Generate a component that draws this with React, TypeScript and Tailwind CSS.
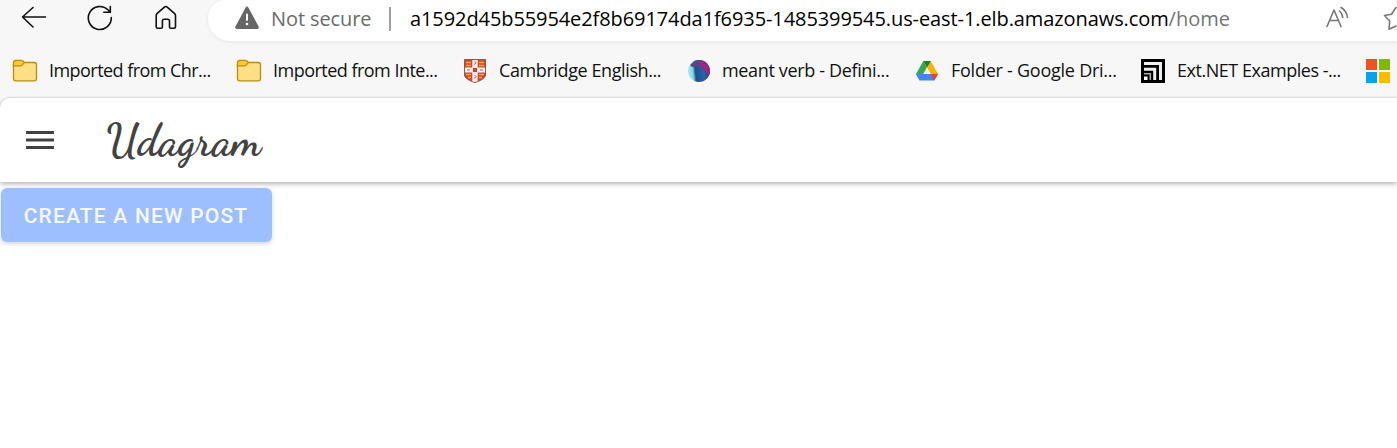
import type { ReactNode } from "react";

function FolderIcon() {
  return (
    <svg width="26" height="24" viewBox="0 0 26 24" className="shrink-0">
      <path d="M1.500 5v14.500a2.300 2.300 0 0 0 2.300 2.300h18.500a2.200 2.200 0 0 0 2.200-2.200V5.700a2.200 2.200 0 0 0-2.200-2.200H12Z" fill="#ffdf85" stroke="#bd8c0b" strokeWidth="1.300" />
      <path d="M1.500 6.800V3.500a2.200 2.200 0 0 1 2.200-2.200h5.500c1.400 0 2.400.8 3 2.300L10 6.300Q9.500 6.800 8.500 6.800Z" fill="#ffc928" stroke="#bd8c0b" strokeWidth="1.300" />
    </svg>
  );
}

function ShieldIcon() {
  return (
    <svg width="22" height="24" viewBox="0 0 22 24" className="shrink-0">
      <path d="M.5.5h21V16c0 3-5 6-10.500 7.500C5.500 22 .5 19 .5 16Z" fill="#d9432f" stroke="#8b5a45" />
      <path d="M2 3.500h5M2 6.500h5M15 3.500h5M15 6.500h5M2 15.500h5M15 15.500h5M4 18.500h3M15 18.500h3" stroke="#e9ad35" strokeWidth="1.700" />
      <path d="M8.300 1h5.400v7.500H21v5h-7.300v8.700L11 23l-2.700-.8v-8.700H1v-5h7.300Z" fill="#f7eeee" />
      <path d="M9 9h4v4H9Z" fill="#df3a2c" />
      <path d="M10.500 2.500l1.500 1-1.500 2M3 11h3M16 11h3M10.500 16l1.500 1.500-1.500 2" fill="none" stroke="#77777d" />
    </svg>
  );
}

function SphereIcon() {
  return (
    <svg width="24" height="24" viewBox="0 0 24 24" className="shrink-0">
      <defs>
        <linearGradient id="sphere" x1="0" x2="1" y1=".55" y2=".45">
          <stop offset="0" stopColor="#a8f4fb" />
          <stop offset=".24" stopColor="#86d6e8" />
          <stop offset=".35" stopColor="#214f86" />
          <stop offset=".7" stopColor="#2863ac" />
          <stop offset="1" stopColor="#292f78" />
        </linearGradient>
        <clipPath id="disc"><circle cx="12" cy="12" r="11" /></clipPath>
      </defs>
      <g clipPath="url(#disc)">
        <path d="M0 0h24v24H0Z" fill="url(#sphere)" />
        <path d="M9 7 12 0h12v17.500l-2-.5L13 7Z" fill="#922b83" />
        <path d="M3 6 10 0l4 2-2 5-7 1Z" fill="#5a4680" />
      </g>
    </svg>
  );
}

function DriveIcon() {
  return (
    <svg width="22" height="20" viewBox="0 0 22 20" className="shrink-0">
      <path d="M7.300 0 0 13l3.700 6.500L11 6.400Z" fill="#34a853" />
      <path d="M7.300 0h7.400L22 13h-7.400Z" fill="#fbb004" />
      <path d="M7.300 0 11 6.400 14.700 0Z" fill="#188038" />
      <path d="M0 13h22l-3.700 6.500H3.700Z" fill="#4285f4" />
      <path d="M14.600 13H22l-3.700 6.500Z" fill="#ea4335" />
      <path d="M7.300 13 11 6.400 14.700 13Z" fill="#f7f7f7" />
    </svg>
  );
}

function ExtIcon() {
  return (
    <svg width="24" height="24" viewBox="0 0 24 24" className="shrink-0">
      <path d="M0 0h24v24H0Z" />
      <path d="M3 4.500h16.500V21M3 10.300h10.700V21" fill="none" stroke="#eee" strokeWidth="3" />
      <path d="M3 14.700h6.300V21" fill="none" stroke="#aaa" strokeWidth="1.600" />
      <path d="M3 17.500h3.500V21H3Z" fill="#fff" />
    </svg>
  );
}

function Bookmark({ icon, children, className }: { icon: ReactNode; children: ReactNode; className: string }) {
  return (
    <div className={`flex shrink-0 items-center whitespace-nowrap ${className}`}>
      {icon}
      <span className="-mt-[2px]">{children}</span>
    </div>
  );
}

function AddressBar() {
  return (
    <div className="flex h-[41px] items-start">
      <svg width="208" height="41" viewBox="0 0 208 41" fill="none" stroke="#111" strokeWidth="1.600" strokeLinecap="round" strokeLinejoin="round" className="shrink-0">
        <path d="M45.500 17H22.500M33 7.500 22.500 17 33 27" />
        <path d="M111.300 17.500a11.500 11.500 0 1 1-3.400-7.700L110.300 12.300M110.300 6.500v5.800h-6.500" />
        <path d="M156.200 15.500q0-1.200 1-2.100l7.200-6.300q1.400-1.100 2.800 0l7.200 6.300q1.100 1 1.100 2.100v11.300q0 1.500-1.500 1.500h-3.200q-1.300 0-1.300-1.300V21q0-1.700-1.700-1.700h-3.700q-1.700 0-1.700 1.700v6q0 1.300-1.300 1.300h-3.400q-1.500 0-1.500-1.500Z" />
      </svg>
      <div className="flex h-[41px] flex-1 items-start rounded-bl-[22px] rounded-tl-[18px] bg-white pl-[27px] shadow-[0_1px_4px_rgba(0,0,0,0.08)]">
        <svg width="24" height="30" viewBox="0 0 24 30" className="shrink-0">
          <path d="M10.700 7.400q1.300-1.800 2.600 0l10.300 19q.9 2.600-1.500 2.600H1.900Q-.5 29 .4 26.400Z" fill="#666" />
          <path d="M12 14.500v5.500" stroke="#fff" strokeWidth="2" strokeLinecap="round" />
          <circle cx="12" cy="24" r="1.300" fill="#fff" />
        </svg>
        <span className="ml-3 w-[118px] shrink-0 whitespace-nowrap text-[20px] leading-[38px] tracking-[-0.1px] text-[#6b6b6b]">Not secure</span>
        <span className="mt-[7px] h-6 w-[2px] shrink-0 bg-[#a0a0a0]" />
        <span className="ml-[19px] w-[915px] shrink-0 whitespace-nowrap text-[20px] leading-[38px] text-black">
          <span className="tracking-[-0.09px]">a1592d45b55954e2f8b69174da1f6935-1485399545.us-east-1.elb.amazonaws.com</span><span className="text-[#757575]">/home</span>
        </span>
        <svg width="73" height="36" viewBox="0 0 73 36" fill="none" stroke="#777" strokeWidth="1.600" strokeLinecap="round" strokeLinejoin="round" className="shrink-0">
          <path d="m2 26.500 7-16.500 7 16.500M4.500 20.500h9M14.500 11q3 2.500 3.200 6.500M16 7.500q5.500 3 6.500 10" />
          <path d="m71 7.500-4.500 6.700-7 1.300 5.200 5.500-.7 8.300 7-3.300" />
        </svg>
      </div>
    </div>
  );
}

export default function App() {
  return (
    <div className="h-[448px] w-full overflow-hidden bg-[#f7f7f7] font-['Open_Sans','Noto_Sans',sans-serif]">
      <AddressBar />
      <nav className="flex h-[57px] overflow-hidden pl-3 pt-[3px] text-[18px] leading-6 tracking-[-0.35px] text-[#111]">
        <Bookmark icon={<FolderIcon />} className="w-[224px] gap-[11px] tracking-[-0.55px]">Imported from Chr...</Bookmark>
        <Bookmark icon={<FolderIcon />} className="w-[228px] gap-[11px] tracking-[-0.52px]">Imported from Inte...</Bookmark>
        <Bookmark icon={<ShieldIcon />} className="w-[223px] gap-[13px] tracking-[-0.4px]">Cambridge English...</Bookmark>
        <Bookmark icon={<SphereIcon />} className="w-[229px] gap-[11px]">meant verb - Defini...</Bookmark>
        <Bookmark icon={<DriveIcon />} className="w-[225px] gap-[13px] tracking-[-0.25px]">Folder - Google Dri...</Bookmark>
        <Bookmark icon={<ExtIcon />} className="w-[225px] gap-3 tracking-[-0.47px]">Ext.NET Examples -...</Bookmark>
        <div className="grid h-[54px] shrink-0 grid-cols-[11px_11px] content-center gap-[2px]">
          <i className="h-[11px] bg-[#f25022]" /><i className="h-[11px] bg-[#7fba00]" />
          <i className="h-[11px] bg-[#00a4ef]" /><i className="h-[11px] bg-[#ffb900]" />
        </div>
      </nav>
      <main className="h-[350px] rounded-tl-[10px] bg-white shadow-[0_0_2px_rgba(0,0,0,0.2)]">
        <header className="flex h-[84px] items-center rounded-tl-[10px] bg-white pl-[26px] shadow-[0_2px_5px_rgba(0,0,0,0.3)]">
          <svg width="28" height="20" viewBox="0 0 28 20" className="shrink-0">
            <path d="M0 1h28v3H0ZM0 8.500h28v3H0ZM0 16h28v3H0Z" fill="#424242" />
          </svg>
          <h1 className="ml-[52px] pt-px font-['Dancing_Script',cursive] text-[44px] font-bold leading-[60px] text-[#424242]">Udagram</h1>
        </header>
        <button className="ml-px mt-[6px] flex h-[54px] w-[271px] items-center justify-center rounded-[6px] bg-[#9dbfff] pr-px pt-[3px] font-['Roboto',sans-serif] text-[21px] font-medium tracking-[1.2px] text-white/90 shadow-[0_2px_4px_rgba(0,0,0,0.16)]">CREATE A NEW POST</button>
      </main>
    </div>
  );
}
